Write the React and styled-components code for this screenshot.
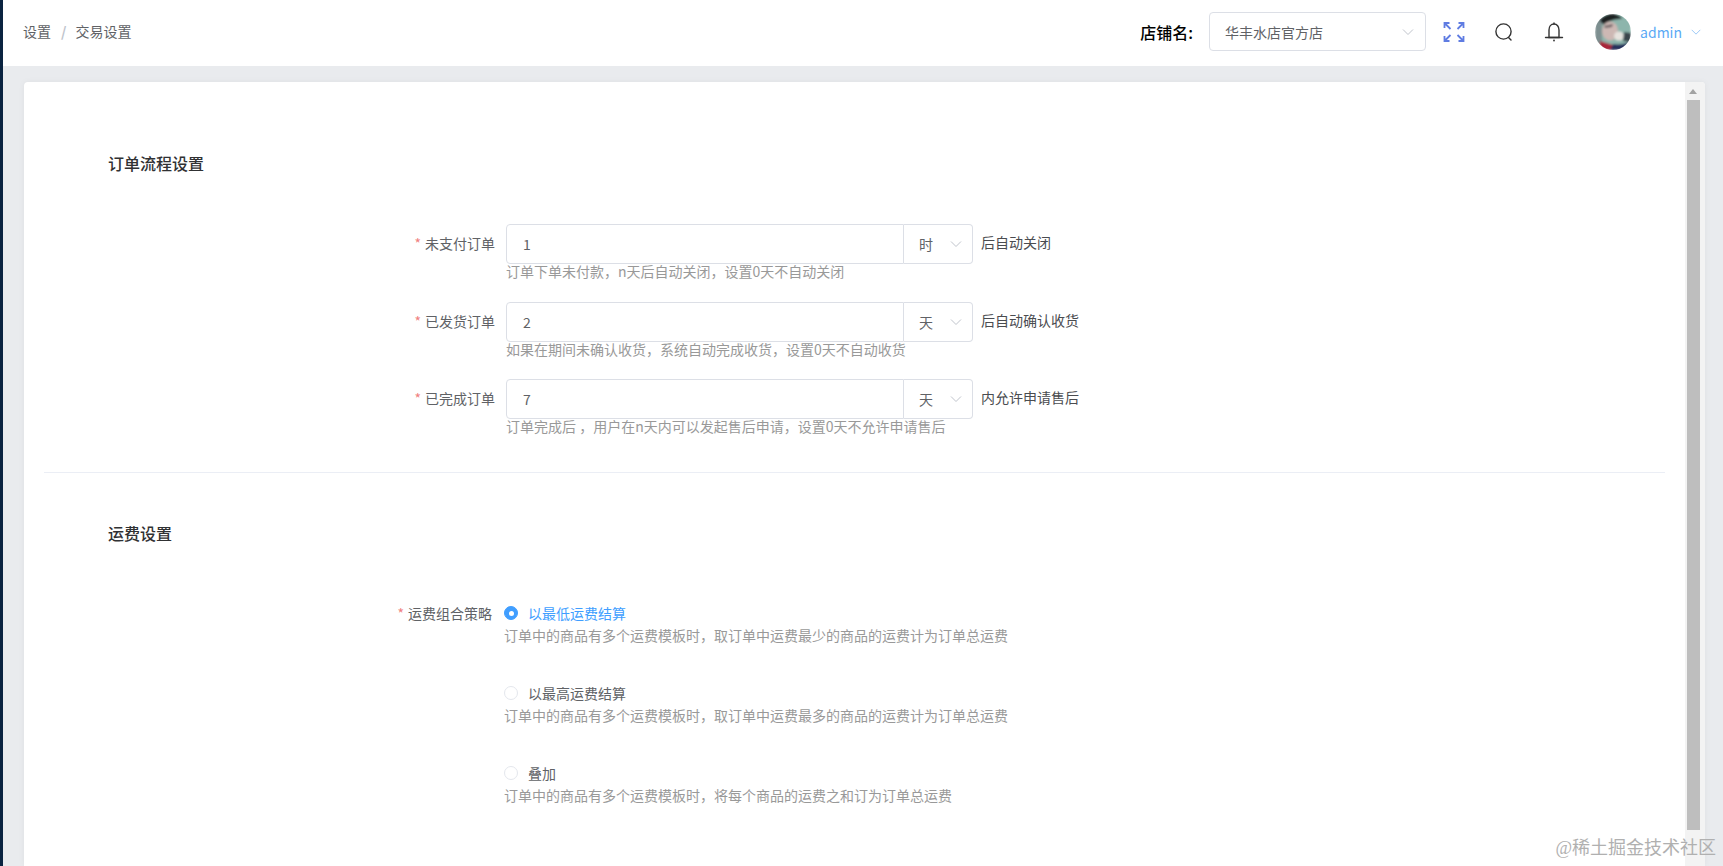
import React from "react";
import styled, { createGlobalStyle } from "styled-components";

const GlobalStyle = createGlobalStyle`
  html, body, #root {
    margin: 0;
    height: 100%;
  }
  body {
    overflow: hidden;
    background: #e9ebee;
    font-family: "Noto Sans CJK SC", "Noto Sans", sans-serif;
    font-size: 14px;
    color: #606266;
  }
`;

const Page = styled.div`
  display: flex;
  height: 866px;
  overflow: hidden;
  position: relative;
`;

const SideEdge = styled.div`
  width: 3px;
  flex-shrink: 0;
  background: #0a2340;
`;

const Main = styled.div`
  flex: 1;
  display: flex;
  flex-direction: column;
  min-width: 0;
`;

const Header = styled.header`
  height: 66px;
  flex-shrink: 0;
  display: flex;
  align-items: center;
  justify-content: space-between;
  padding: 0 21px 3px 20px;
  box-sizing: border-box;
  background: #fff;
`;

const Breadcrumb = styled.div`
  display: flex;
  align-items: center;
  margin-bottom: 2px;
  color: #606266;
`;

const Slash = styled.span`
  margin: 0 9px 0 10px;
  color: #c0c4cc;
  font-weight: 700;
`;

const HeaderRight = styled.div`
  display: flex;
  align-items: center;
`;

const ShopLabel = styled.span`
  font-size: 16px;
  font-weight: 500;
  color: #000;
  margin-right: 16px;
`;

const ShopSelect = styled.div`
  width: 217px;
  height: 39px;
  box-sizing: border-box;
  border: 1px solid #dcdfe6;
  border-radius: 4px;
  display: flex;
  align-items: center;
  justify-content: space-between;
  padding: 0 10px 0 15px;
  margin-right: 3px;
`;

const IconSlot = styled.div`
  width: 50px;
  display: flex;
  justify-content: center;
  align-items: center;
`;

const Avatar = styled.svg`
  width: 36px;
  height: 36px;
  margin-left: 16px;
  border-radius: 50%;
`;

const UserName = styled.span`
  margin-left: 9px;
  color: #5aa9f5;
`;

const UserArrow = styled.span`
  display: flex;
  margin-left: 8px;
`;

const Content = styled.div`
  flex: 1;
  min-height: 0;
  padding: 16px 18px 0 21px;
`;

const Card = styled.div`
  height: 100%;
  display: flex;
  background: #fff;
  border-radius: 4px 4px 0 0;
  box-shadow: 0 0 6px rgba(0, 0, 0, 0.05);
  overflow: hidden;
`;

const CardBody = styled.div`
  flex: 1;
  min-width: 0;
  padding: 69px 20px 0;
`;

const SectionTitle = styled.h3`
  margin: 0 0 ${(p) => p.$after}px 64px;
  font-size: 16px;
  line-height: 24px;
  font-weight: 500;
  color: #303133;
`;

const FieldRow = styled.div`
  display: grid;
  grid-template-columns: 451px 1fr;
  column-gap: 11px;
  margin-bottom: 19.5px;
`;

const FieldLabel = styled.label`
  text-align: right;
  line-height: 38px;
  color: #606266;
`;

const Star = styled.span`
  color: #f08080;
  margin-right: 4px;
`;

const Controls = styled.div`
  display: flex;
  align-items: center;
  height: 40px;
`;

const NumberBox = styled.div`
  width: 398px;
  height: 40px;
  box-sizing: border-box;
  border: 1px solid #dcdfe6;
  border-radius: 4px 0 0 4px;
  line-height: 38px;
  padding-left: 16px;
  color: #606266;
`;

const UnitSelect = styled.div`
  width: 69px;
  height: 40px;
  box-sizing: border-box;
  border: 1px solid #dcdfe6;
  border-left: none;
  border-radius: 0 4px 4px 0;
  display: flex;
  align-items: center;
  justify-content: space-between;
  padding: 0 9px 0 15px;
  color: #606266;
`;

const AfterText = styled.span`
  margin-left: 8px;
  margin-top: -4px;
  color: #4a4c50;
`;

const Hint = styled.div`
  line-height: 18px;
  color: #999;
`;

const FieldHint = styled(Hint)`
  margin: -2px 0 2px;
`;

const Divider = styled.div`
  height: 1px;
  background: #ebeef5;
  margin: 35px 0 48px;
`;

const RadioRow = styled.div`
  display: grid;
  grid-template-columns: 448px 1fr;
  column-gap: 12px;
  margin-bottom: 39px;
`;

const RadioLabel = styled.label`
  text-align: right;
  line-height: 20px;
  color: #606266;
`;

const RadioLine = styled.div`
  display: flex;
  align-items: center;
  height: 20px;
  margin-bottom: 3px;
  color: ${(p) => (p.$active ? "#409eff" : "#606266")};
`;

const RadioDot = styled.span`
  width: 14px;
  height: 14px;
  box-sizing: border-box;
  border-radius: 50%;
  margin-right: 10px;
  border: 1px solid ${(p) => (p.$active ? "#409eff" : "#e4e7ed")};
  background: ${(p) => (p.$active ? "#409eff" : "#fff")};
  display: flex;
  align-items: center;
  justify-content: center;

  &::after {
    content: "";
    width: 5px;
    height: 5px;
    border-radius: 50%;
    background: ${(p) => (p.$active ? "#fff" : "transparent")};
  }
`;

const ScrollTrack = styled.div`
  width: 20px;
  flex-shrink: 0;
  background: #f3f3f3;
  display: flex;
  flex-direction: column;
  align-items: flex-start;
  padding-left: 2px;
  box-sizing: border-box;
`;

const ScrollUp = styled.div`
  width: 0;
  height: 0;
  margin: 7px 0 0 2px;
  border-left: 4.5px solid transparent;
  border-right: 4.5px solid transparent;
  border-bottom: 5px solid #a3a3a3;
`;

const ScrollThumb = styled.div`
  width: 13px;
  height: 730px;
  margin-top: 6px;
  background: #bebebe;
`;

const Watermark = styled.div`
  position: absolute;
  right: 7px;
  bottom: 6px;
  font-family: "Liberation Serif", "Noto Sans CJK SC", serif;
  font-size: 18px;
  line-height: 24px;
  color: #b0b0b0;
`;

const Chevron = ({ size = 14, color = "#c0c4cc" }) => (
  <svg width={size} height={size} viewBox="0 0 14 14" fill="none">
    <path d="M2 4.5L7 9.5L12 4.5" stroke={color} strokeWidth="1" />
  </svg>
);

const FullscreenIcon = () => (
  <svg width="24" height="24" viewBox="0 0 24 24" fill="none" stroke="#5f7ce2" strokeWidth="1.8">
    <path d="M2.5 8V3H7.5M3 3.5L8.5 9" />
    <path d="M21.5 8V3H16.5M21 3.5L15.5 9" />
    <path d="M2.5 16V21H7.5M3 20.5L8.5 15" />
    <path d="M21.5 16V21H16.5M21 20.5L15.5 15" />
  </svg>
);

const SearchIcon = () => (
  <svg width="22" height="22" viewBox="0 0 22 22" fill="none" stroke="#333" strokeWidth="1.4">
    <circle cx="10.5" cy="10.5" r="7.6" />
    <path d="M15.5 16.5L18 19" strokeLinecap="round" />
  </svg>
);

const BellIcon = () => (
  <svg width="22" height="22" viewBox="0 0 22 22" fill="none" stroke="#333" strokeWidth="1.4">
    <path d="M11 3C8 3 6 5.5 6 9V16.5H16V9C16 5.5 14 3 11 3Z" />
    <path d="M2.5 16.5H19.5" strokeLinecap="round" />
    <path d="M11 2V3" strokeLinecap="round" />
    <circle cx="11" cy="19.5" r="0.9" fill="#333" stroke="none" />
  </svg>
);

const rows = [
  { label: "未支付订单", value: "1", unit: "时", after: "后自动关闭", hint: "订单下单未付款，n天后自动关闭，设置0天不自动关闭" },
  { label: "已发货订单", value: "2", unit: "天", after: "后自动确认收货", hint: "如果在期间未确认收货，系统自动完成收货，设置0天不自动收货" },
  { label: "已完成订单", value: "7", unit: "天", after: "内允许申请售后", hint: "订单完成后 ，用户在n天内可以发起售后申请，设置0天不允许申请售后" },
];

const freightRows = [
  { name: "以最低运费结算", hint: "订单中的商品有多个运费模板时，取订单中运费最少的商品的运费计为订单总运费", active: true },
  { name: "以最高运费结算", hint: "订单中的商品有多个运费模板时，取订单中运费最多的商品的运费计为订单总运费" },
  { name: "叠加", hint: "订单中的商品有多个运费模板时，将每个商品的运费之和订为订单总运费" },
];

export default function App() {
  return (
    <Page>
      <GlobalStyle />
      <SideEdge />
      <Main>
        <Header>
          <Breadcrumb>
            <span>设置</span>
            <Slash>/</Slash>
            <span>交易设置</span>
          </Breadcrumb>
          <HeaderRight>
            <ShopLabel>店铺名:</ShopLabel>
            <ShopSelect>
              <span>华丰水店官方店</span>
              <Chevron />
            </ShopSelect>
            <IconSlot><FullscreenIcon /></IconSlot>
            <IconSlot><SearchIcon /></IconSlot>
            <IconSlot><BellIcon /></IconSlot>
            <Avatar viewBox="0 0 36 36">
              <defs>
                <filter id="soft"><feGaussianBlur stdDeviation="1" /></filter>
              </defs>
              <g filter="url(#soft)">
                <rect width="36" height="36" fill="#8db5ac" />
                <rect x="0" y="0" width="7" height="36" fill="#7d8f90" />
                <path d="M5 7C8 -2 24 -2 27 5C21 5 14 6 9 11Z" fill="#1d2024" />
                <ellipse cx="15" cy="17" rx="8" ry="9.5" fill="#cdb8b4" />
                <path d="M9 12L18 10L17 13L10 14Z" fill="#6a5f62" />
                <ellipse cx="24" cy="22" rx="5" ry="4.5" fill="#e6e3de" />
                <path d="M29 18L36 19V28L28 27Z" fill="#3b454b" />
                <path d="M5 36V27L18 31L16 36Z" fill="#a8263a" />
                <path d="M15 36L18 30C24 31 30 30 34 28V36Z" fill="#28335c" />
              </g>
            </Avatar>
            <UserName>admin</UserName>
            <UserArrow><Chevron size={12} color="#8cc0f5" /></UserArrow>
          </HeaderRight>
        </Header>
        <Content>
          <Card>
            <CardBody>
              <SectionTitle $after={49}>订单流程设置</SectionTitle>
              {rows.map((r) => (
                <FieldRow key={r.label}>
                  <FieldLabel><Star>*</Star>{r.label}</FieldLabel>
                  <div>
                    <Controls>
                      <NumberBox>{r.value}</NumberBox>
                      <UnitSelect>
                        <span>{r.unit}</span>
                        <Chevron />
                      </UnitSelect>
                      <AfterText>{r.after}</AfterText>
                    </Controls>
                    <FieldHint>{r.hint}</FieldHint>
                  </div>
                </FieldRow>
              ))}
              <Divider />
              <SectionTitle $after={58}>运费设置</SectionTitle>
              {freightRows.map((r, i) => (
                <RadioRow key={r.name}>
                  <RadioLabel>{i === 0 && <><Star>*</Star>运费组合策略</>}</RadioLabel>
                  <div>
                    <RadioLine $active={r.active}>
                      <RadioDot $active={r.active} />
                      {r.name}
                    </RadioLine>
                    <Hint>{r.hint}</Hint>
                  </div>
                </RadioRow>
              ))}
            </CardBody>
            <ScrollTrack>
              <ScrollUp />
              <ScrollThumb />
            </ScrollTrack>
          </Card>
        </Content>
      </Main>
      <Watermark>@稀土掘金技术社区</Watermark>
    </Page>
  );
}
